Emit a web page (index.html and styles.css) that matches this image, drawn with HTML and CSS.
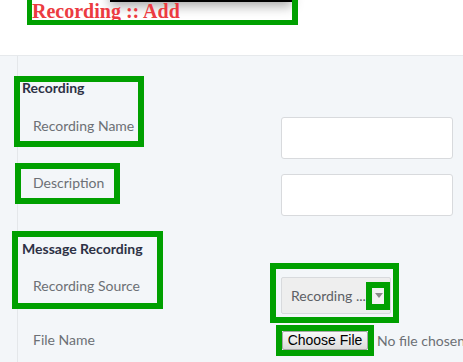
FILE: index.html
```html
<!DOCTYPE html>
<html>
<head>
<meta charset="utf-8">
<link rel="stylesheet" href="styles.css">
</head>
<body>
<div class="page">
  <header class="header">
    <div class="title-wrap">
      <div class="menu-bar"></div>
      <h1 class="title">Recording :: Add</h1>
    </div>
  </header>
  <main class="main">
    <aside class="sidebar"></aside>
    <section class="content">
      <h3 class="section first">Recording</h3>
      <div class="row r1">
        <label class="label">Recording Name</label>
        <div class="input"></div>
      </div>
      <div class="row r2">
        <label class="label">Description</label>
        <div class="input"></div>
      </div>
      <h3 class="section second">Message Recording</h3>
      <div class="row r3">
        <label class="label">Recording Source</label>
        <div class="select"><span class="select-text">Recording ...</span><span class="select-arrow"><span class="tri"></span></span></div>
      </div>
      <div class="row r4">
        <label class="label">File Name</label>
        <div class="file"><span class="file-btn">Choose File</span><span class="file-text">No file chosen</span></div>
      </div>
    </section>
  </main>
  <div class="hl hl-title"></div>
  <div class="hl hl-rec"></div>
  <div class="hl hl-desc"></div>
  <div class="hl hl-msg"></div>
  <div class="hl hl-select"></div>
  <div class="hl hl-arrow"></div>
  <div class="hl hl-file"></div>
</div>
</body>
</html>
```
FILE: styles.css
```css
* { box-sizing: border-box; }
html, body { margin: 0; padding: 0; }
body {
  width: 463px;
  height: 362px;
  overflow: hidden;
  font-family: Lato, "Open Sans", sans-serif;
  background: #ffffff;
}
.page { position: relative; width: 463px; height: 362px; }

.header { height: 55px; background: #fff; padding-left: 32px; }
.title-wrap { position: relative; width: 260px; height: 20px; }
.menu-bar {
  position: absolute;
  left: 78px; top: -20px;
  width: 182px; height: 22px;
  background: #000;
  box-shadow: 0 4px 12px rgba(0,0,0,0.35);
}
.title {
  position: relative;
  margin: 0;
  font-family: "Liberation Serif", serif;
  font-size: 20px;
  font-weight: bold;
  line-height: 23px;
  color: #ec3b41;
  white-space: nowrap;
}

.main {
  display: flex;
  height: 307px;
  background: #f3f6f9;
  border-top: 1px solid #e6e9ec;
}
.sidebar { width: 18px; border-right: 1px solid #e4e7ea; flex: none; }
.content { flex: 1; padding-left: 4px; }

.section {
  margin: 0;
  font-size: 14px;
  font-weight: bold;
  line-height: 16px;
  color: #2d3145;
}
.section.first { margin-top: 24px; }
.section.second { margin-top: 25px; }

.row { display: flex; align-items: flex-start; }
.r1 { margin-top: 21px; }
.r2 { margin-top: 15px; }
.r3 { margin-top: 20px; }
.r4 { margin-top: 17px; }

.label {
  width: 259px;
  padding-left: 11px;
  padding-top: 1px;
  font-size: 14px;
  line-height: 16px;
  color: #6c7075;
}
.input {
  width: 172px;
  height: 42px;
  background: #fff;
  border: 1px solid #d8dadd;
  border-radius: 3px;
}
.select {
  width: 110px;
  height: 37px;
  background: #eeeeee;
  border: 1px solid #d8dadd;
  border-radius: 2px;
  display: flex;
  align-items: center;
  padding-left: 9px;
}
.select-text { font-size: 14px; color: #5c6065; white-space: nowrap; width: 82px; overflow: hidden; }
.select-arrow {
  width: 12px; height: 16px;
  background: #f2f2f2;
  display: flex; align-items: center; justify-content: center;
}
.tri {
  width: 0; height: 0;
  border-left: 4px solid transparent;
  border-right: 4px solid transparent;
  border-top: 5px solid #8a8a8a;
}
.file { display: flex; align-items: center; margin-left: 1px; }
.file-btn {
  width: 86px; height: 19px;
  background: linear-gradient(#f8f8f8, #dcdcdc);
  border: 1px solid #a6a6a6;
  border-radius: 2px;
  font-family: "Liberation Sans", Arial, sans-serif;
  font-size: 14px;
  line-height: 17px;
  color: #000;
  text-align: center;
}
.file-text {
  margin-left: 9px;
  font-size: 14px;
  color: #6c7075;
  white-space: nowrap;
}

.hl { position: absolute; border: 6px solid #00a000; }
.hl-title { left: 27px; top: -10px; width: 271px; height: 35px; border-width: 5px 6px 5px 5px; }
.hl-rec { left: 14px; top: 76px; width: 130px; height: 71px; }
.hl-desc { left: 15px; top: 163px; width: 105px; height: 41px; }
.hl-msg { left: 12px; top: 231px; width: 151px; height: 78px; }
.hl-select { left: 270px; top: 263px; width: 129px; height: 60px; }
.hl-arrow { left: 366px; top: 282px; width: 24px; height: 28px; }
.hl-file { left: 276px; top: 325px; width: 98px; height: 31px; }
```
